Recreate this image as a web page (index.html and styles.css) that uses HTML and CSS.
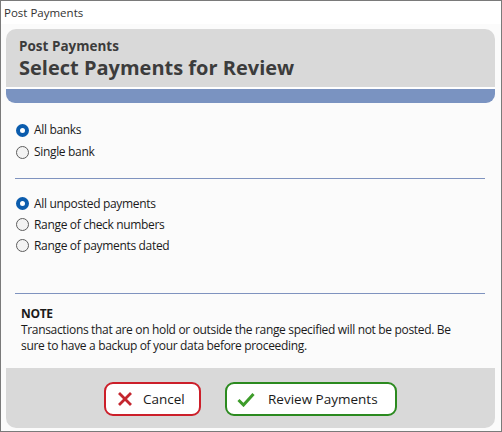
FILE: index.html
```html
<!DOCTYPE html>
<html>
<head>
<meta charset="utf-8">
<link rel="stylesheet" href="styles.css">
</head>
<body>
<div class="window">
  <div class="titlebar">Post Payments</div>
  <div class="content">
    <div class="header">
      <div class="header-top">
        <div class="subtitle">Post Payments</div>
        <div class="title">Select Payments for Review</div>
      </div>
      <div class="header-gap"></div>
      <div class="header-bar"></div>
    </div>
    <div class="body">
      <div class="group group-a">
        <div class="row"><span class="radio checked"></span><span class="label">All banks</span></div>
        <div class="row"><span class="radio"></span><span class="label">Single bank</span></div>
      </div>
      <div class="sep sep-a"></div>
      <div class="group group-b">
        <div class="row row-b"><span class="radio checked"></span><span class="label">All unposted payments</span></div>
        <div class="row row-b"><span class="radio"></span><span class="label">Range of check numbers</span></div>
        <div class="row row-b"><span class="radio"></span><span class="label">Range of payments dated</span></div>
      </div>
      <div class="sep sep-b"></div>
      <div class="note">
        <div class="note-title">NOTE</div>
        <div class="note-text">Transactions that are on hold or outside the range specified will not be posted. Be<br>sure to have a backup of your data before proceeding.</div>
      </div>
    </div>
    <div class="footer">
      <button class="btn btn-cancel">
        <svg class="icon-x" width="14" height="14" viewBox="0 0 14 14"><path d="M2 2 L12 12 M12 2 L2 12" stroke="#c4262e" stroke-width="2.8" stroke-linecap="square" fill="none"/></svg>
        <span>Cancel</span>
      </button>
      <button class="btn btn-review">
        <svg class="icon-check" width="18" height="15" viewBox="0 0 18 15"><path d="M1.5 8 L6.5 13 L16.5 2" stroke="#3d9c2a" stroke-width="3" fill="none"/></svg>
        <span>Review Payments</span>
      </button>
    </div>
  </div>
</div>
</body>
</html>
```
FILE: styles.css
```css
html, body {
  margin: 0;
  padding: 0;
}
body {
  font-family: "Open Sans", "Noto Sans", "Liberation Sans", sans-serif;
  color: #1a1a1a;
}
.window {
  width: 502px;
  height: 432px;
  box-sizing: border-box;
  border: 1px solid #7a7a7a;
  background: #fbfbfb;
}
.titlebar {
  height: 23px;
  background: #ffffff;
  font-size: 11.5px;
  line-height: 23px;
  padding-left: 3px;
  color: #333;
}
.content {
  padding: 5px 6px 0 5px;
}
.header {
  border-radius: 10px 10px 9px 9px;
  overflow: hidden;
}
.header-top {
  height: 58px;
  background: #d9d9d9;
  padding-left: 13px;
  box-sizing: border-box;
  padding-top: 8px;
  color: #3c3c3c;
}
.subtitle {
  font-size: 13.5px;
  font-weight: 700;
  line-height: 18px;
}
.title {
  font-size: 20px;
  font-weight: 700;
  line-height: 26px;
}
.header-gap {
  height: 2px;
  background: #ffffff;
}
.header-bar {
  height: 14px;
  background: #7a93c1;
}
.body {
  padding: 16px 10px 0 9px;
}
.group {
  display: flex;
  flex-direction: column;
}
.row {
  height: 22px;
  display: flex;
  align-items: center;
  padding-left: 1px;
  font-size: 12px;
  letter-spacing: -0.33px;
}
.row-b {
  height: 21px;
}
.radio {
  width: 13px;
  height: 13px;
  box-sizing: border-box;
  border-radius: 50%;
  border: 1px solid #5d5d5d;
  background: #f3f3f3;
  margin-right: 5px;
  flex: none;
}
.radio.checked {
  border: 4px solid #0b5cad;
  background: #ffffff;
}
.label {
  line-height: 16px;
}
.sep {
  height: 1px;
  background: #7f93bf;
  width: 470px;
}
.sep-a {
  margin-top: 15px;
  margin-bottom: 14px;
}
.sep-b {
  margin-top: 37px;
}
.note {
  padding-left: 6px;
  margin-top: 12px;
  font-size: 12px;
  line-height: 16px;
  letter-spacing: -0.33px;
}
.note-title {
  font-weight: 700;
}
.footer {
  margin-top: 14px;
  height: 60px;
  background: #d9d9d9;
  border-radius: 0 0 10px 10px;
  display: flex;
  justify-content: center;
  align-items: flex-start;
  gap: 24px;
  padding-top: 14px;
  box-sizing: border-box;
}
.btn {
  height: 34px;
  box-sizing: border-box;
  background: #ffffff;
  border-radius: 9px;
  border: 2px solid;
  display: flex;
  align-items: center;
  font-family: "Open Sans", "Noto Sans", "Liberation Sans", sans-serif;
  font-size: 13.5px;
  color: #1a1a1a;
  padding: 0;
}
.btn-cancel {
  width: 97px;
  border-color: #cc1f2a;
  padding-left: 12px;
}
.btn-cancel .icon-x {
  margin-right: 11px;
}
.btn-review {
  width: 172px;
  border-color: #2b8a1f;
  padding-left: 10px;
}
.btn-review .icon-check {
  margin-right: 13px;
}
```
